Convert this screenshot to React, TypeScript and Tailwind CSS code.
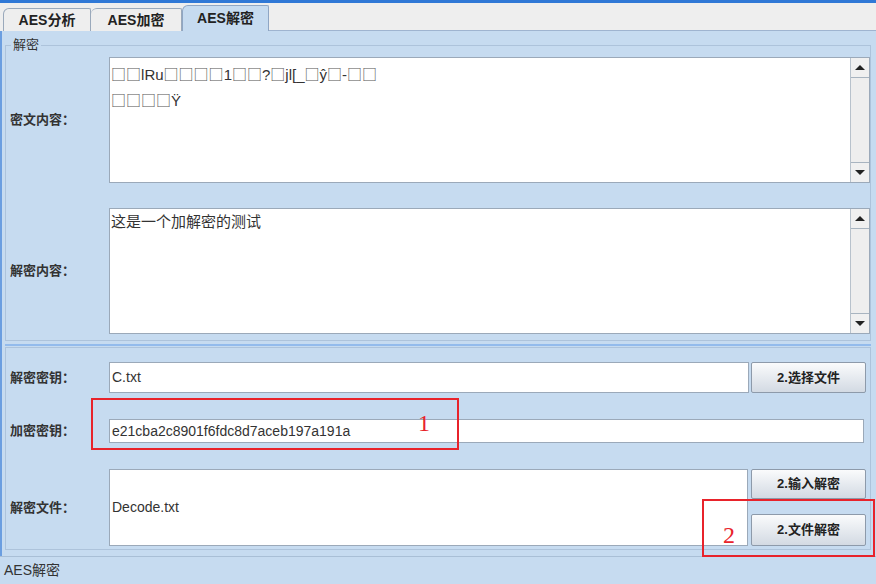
import React from "react"

const cjk = "font-['Liberation_Sans','Noto_Sans_CJK_SC',sans-serif]"

function ScrollBar() {
  return (
    <div className="flex w-[19px] flex-col border-l border-[#b8c2cc] bg-[#eeeeee]">
      <div className="flex h-[20px] items-center justify-center border-b border-[#a8b4c0] bg-[#f0f0f0]">
        <div className="h-0 w-0 border-x-[5px] border-b-[5px] border-x-transparent border-b-[#222]" />
      </div>
      <div className="flex-1" />
      <div className="flex h-[20px] items-center justify-center border-t border-[#a8b4c0] bg-[#f0f0f0]">
        <div className="h-0 w-0 border-x-[5px] border-t-[5px] border-x-transparent border-t-[#222]" />
      </div>
    </div>
  )
}

// garbled text: the missing-glyph boxes are drawn wider than the latin letters
function Garbled({ text }: { text: string }) {
  return (
    <div>
      {Array.from(text).map((c, i) =>
        c === "□" ? (
          <span key={i} className="font-['Noto_Sans_CJK_SC',sans-serif] text-[15px] text-[#555]">
            □
          </span>
        ) : (
          <span key={i}>{c}</span>
        )
      )}
    </div>
  )
}

function Label({ text }: { text: string }) {
  return (
    <div className="w-[103px] shrink-0 pl-[4px] text-[13px] font-bold text-[#333]">{text}</div>
  )
}

function Btn({ text, h }: { text: string; h: string }) {
  return (
    <div
      className={`flex w-[115px] items-center justify-center rounded-[2px] border border-[#8d9aaa] bg-gradient-to-b from-[#fafbfc] to-[#d3dae3] text-[13px] font-bold text-[#222] ${h}`}
    >
      {text}
    </div>
  )
}

export default function App() {
  return (
    <div className={`relative flex h-[584px] w-[876px] flex-col overflow-hidden bg-[#c6dbf0] ${cjk}`}>
      <div className="h-[3px] bg-[#2f78d6]" />
      {/* tabs */}
      <div className="flex h-[28px] items-end bg-[#eeeeee] pl-[3px]">
        <div className="flex h-[23px] w-[88px] items-center justify-center rounded-tl-[6px] rounded-tr-[2px] border border-b-0 border-[#9aa9bb] bg-[#eeeeee] text-[14px] font-bold text-[#222]">
          AES分析
        </div>
        <div className="flex h-[23px] w-[91px] items-center justify-center rounded-tl-[6px] rounded-tr-[2px] border border-b-0 border-l-0 border-[#9aa9bb] bg-[#eeeeee] text-[14px] font-bold text-[#222]">
          AES加密
        </div>
        <div className="flex h-[26px] w-[87px] items-center justify-center rounded-tl-[6px] rounded-tr-[2px] border border-b-0 border-[#8fa6c4] bg-[#c6dbf0] text-[14px] font-bold text-[#222]">
          AES解密
        </div>
        <div className="h-px flex-1 bg-[#9fb4d0]" />
      </div>

      {/* main panel */}
      <div className="flex flex-1 flex-col border-l-2 border-[#6b9ee0] pl-[3px] pr-[5px]">
        {/* group box */}
        <div className="relative mt-[14px] flex h-[296px] flex-col border border-[#adc3db] pt-[11px]">
          <div className="absolute -top-[9px] left-[5px] bg-[#c6dbf0] px-[2px] text-[13px] leading-[16px] text-[#333]">
            解密
          </div>
          <div className="flex items-center">
            <Label text="密文内容：" />
            <div className="flex h-[126px] flex-1 border border-[#9ba9b9] bg-white">
              <div className="flex-1 px-[1px] pt-[3px] text-[15px] leading-[25px] text-[#333]">
                <Garbled text="□□lRu□□□□1□□?□jl[_□ŷ□-□□" />
                <Garbled text="□□□□Ÿ" />
              </div>
              <ScrollBar />
            </div>
          </div>
          <div className="mt-[25px] flex items-center">
            <Label text="解密内容：" />
            <div className="flex h-[126px] flex-1 border border-[#9ba9b9] bg-white">
              <div className="flex-1 px-[1px] pt-[2px] text-[15px] leading-[22px] text-[#333]">
                这是一个加解密的测试
              </div>
              <ScrollBar />
            </div>
          </div>
        </div>

        <div className="mt-[3px] h-[2px] bg-[#93bbec]" />

        {/* lower box */}
        <div className="mt-[1px] flex h-[203px] flex-col border border-[#adc3db] pt-[14px]">
          <div className="flex items-center">
            <Label text="解密密钥：" />
            <div className="flex h-[31px] w-[640px] items-center border border-[#9ba9b9] bg-white px-[2px] text-[14px] text-[#333]">
              C.txt
            </div>
            <div className="ml-[2px]">
              <Btn text="2.选择文件" h="h-[31px]" />
            </div>
          </div>
          <div className="mt-[26px] flex items-center">
            <Label text="加密密钥：" />
            <div className="flex h-[24px] w-[755px] items-center border border-[#9ba9b9] bg-white px-[2px] text-[14px] text-[#333]">
              e21cba2c8901f6fdc8d7aceb197a191a
            </div>
          </div>
          <div className="mt-[26px] flex items-center">
            <Label text="解密文件：" />
            <div className="flex h-[77px] w-[639px] items-center border border-[#9ba9b9] bg-white px-[2px] text-[14px] text-[#333]">
              Decode.txt
            </div>
            <div className="ml-[3px] flex flex-col gap-[15px]">
              <Btn text="2.输入解密" h="h-[30px]" />
              <Btn text="2.文件解密" h="h-[32px]" />
            </div>
          </div>
        </div>
      </div>

      {/* status bar */}
      <div className="flex h-[28px] items-center border-t border-[#a9bfd6] pl-[4px] text-[14px] text-[#333]">
        AES解密
      </div>

      {/* annotations */}
      <div className="pointer-events-none absolute left-[91px] top-[398px] h-[52px] w-[368px] border-2 border-[#e8232b]" />
      <div className="pointer-events-none absolute left-[418px] top-[405px] font-['Liberation_Serif',serif] text-[24px] text-[#e8232b]">
        1
      </div>
      <div className="pointer-events-none absolute left-[702px] top-[499px] h-[58px] w-[173px] border-2 border-[#e8232b]" />
      <div className="pointer-events-none absolute left-[723px] top-[517px] font-['Liberation_Serif',serif] text-[24px] text-[#e8232b]">
        2
      </div>
    </div>
  )
}
